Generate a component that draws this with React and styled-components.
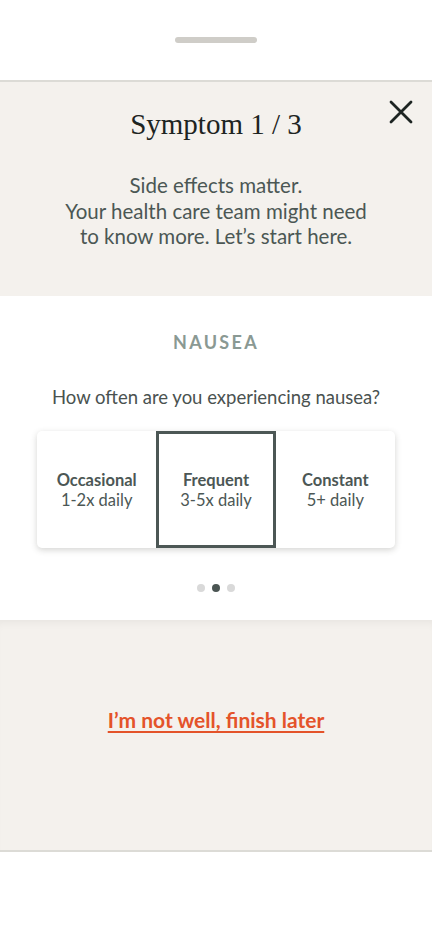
import React from 'react'
import styled, { createGlobalStyle } from 'styled-components';

const GlobalStyle = createGlobalStyle`
  body {
    margin: 0;
    background: #ffffff;
    font-family: "Lato", "Liberation Sans", sans-serif;
  }
`;

const options = [
    { label: 'Occasional', detail: '1-2x daily' },
    { label: 'Frequent', detail: '3-5x daily' },
    { label: 'Constant', detail: '5+ daily' },
];

function App()
{
    const selected = 1;

    return (
        <Sheet>
            <GlobalStyle />
            <HandleBar>
                <Handle />
            </HandleBar>
            <Header>
                <Title>Symptom 1 / 3</Title>
                <CloseButton aria-label="Close">
                    <svg width="24" height="24" viewBox="0 0 24 24" fill="none" stroke="#1d2422" strokeWidth="2.8" strokeLinecap="round">
                        <path d="M2 2 L22 22 M22 2 L2 22" />
                    </svg>
                </CloseButton>
                <Intro>
                    Side effects matter.<br />
                    Your health care team might need<br />
                    to know more. Let’s start here.
                </Intro>
            </Header>
            <Question>
                <SymptomName>NAUSEA</SymptomName>
                <Prompt>How often are you experiencing nausea?</Prompt>
                <Choices>
                    {options.map((o, i) => (
                        <Choice key={o.label} active={i === selected}>
                            <ChoiceLabel>{o.label}</ChoiceLabel>
                            <ChoiceDetail>{o.detail}</ChoiceDetail>
                        </Choice>
                    ))}
                </Choices>
                <Dots>
                    {options.map((o, i) => <Dot key={o.label} active={i === selected} />)}
                </Dots>
            </Question>
            <Footer>
                <LaterLink href="#">I’m not well, finish later</LaterLink>
            </Footer>
        </Sheet>
    );
}

export default App


const Sheet = styled.div`
    width: 432px;
    min-height: 932px;
    background: #fff;
`;

const HandleBar = styled.div`
    height: 82px;
    display: flex;
    justify-content: center;
    padding-top: 37px;
    box-sizing: border-box;
    border-bottom: 2px solid #dcdbd6;
`;

const Handle = styled.div`
    width: 82px;
    height: 6px;
    border-radius: 3px;
    background: #cfcdc8;
`;

const Header = styled.div`
    position: relative;
    background: #f4f1ed;
    height: 214px;
    box-sizing: border-box;
    padding-top: 22px;
    text-align: center;
`;

const Title = styled.h1`
    margin: 0;
    font-family: "Liberation Serif", "DejaVu Serif", serif;
    font-weight: 400;
    font-size: 29px;
    line-height: 40px;
    color: #1d2422;
`;

const CloseButton = styled.button`
    position: absolute;
    top: 18px;
    right: 19px;
    width: 24px;
    height: 24px;
    padding: 0;
    border: none;
    background: transparent;
`;

const Intro = styled.p`
    margin: 29px 0 0;
    font-size: 20.5px;
    line-height: 25.5px;
    color: #4b5754;
`;

const Question = styled.div`
    background: #fff;
    height: 324px;
    box-sizing: border-box;
    padding: 34px 37px 0;
    display: flex;
    flex-direction: column;
    align-items: center;
`;

const SymptomName = styled.div`
    font-size: 18px;
    font-weight: 700;
    letter-spacing: 2.3px;
    color: #8a9993;
    line-height: 24px;
`;

const Prompt = styled.div`
    margin-top: 31px;
    font-size: 18.5px;
    line-height: 24px;
    color: #4a5250;
`;

const Choices = styled.div`
    margin-top: 22px;
    width: 100%;
    display: grid;
    grid-template-columns: repeat(3, 1fr);
    background: #fff;
    border-radius: 5px;
    box-shadow: 0 2px 6px rgba(60, 60, 50, 0.22);
`;

const Choice = styled.div`
    height: 117px;
    box-sizing: border-box;
    display: flex;
    flex-direction: column;
    align-items: center;
    justify-content: center;
    border: 3px solid ${p => p.active ? '#4c5755' : 'transparent'};
    color: #4c5755;
`;

const ChoiceLabel = styled.div`
    font-size: 16.5px;
    font-weight: 700;
    line-height: 20px;
`;

const ChoiceDetail = styled.div`
    font-size: 16.5px;
    line-height: 20px;
`;

const Dots = styled.div`
    margin-top: 36px;
    display: flex;
    gap: 7px;
`;

const Dot = styled.span`
    width: 8px;
    height: 8px;
    border-radius: 50%;
    background: ${p => p.active ? '#4b5553' : '#d9d9d9'};
`;

const Footer = styled.div`
    height: 232px;
    box-sizing: border-box;
    background: #f4f1ed;
    border-bottom: 2px solid #dcdbd6;
    box-shadow: inset 0 8px 10px -6px rgba(0, 0, 0, 0.06);
    display: flex;
    justify-content: center;
    align-items: flex-start;
    padding-top: 86px;
`;

const LaterLink = styled.a`
    font-size: 21px;
    line-height: 28px;
    font-weight: 700;
    color: #e4532a;
    text-decoration: underline;
    text-decoration-thickness: 2px;
    text-underline-offset: 3px;
`;
